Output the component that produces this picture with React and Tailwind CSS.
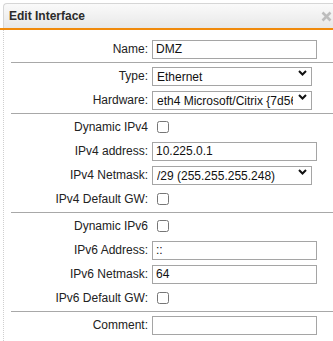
import React from "react";

const font = { fontFamily: '"Liberation Sans", Arial, sans-serif' };

const Chevron = () => (
  <svg width="9" height="6" viewBox="0 0 9 6" className="pointer-events-none absolute right-[5px] top-[6px]">
    <polyline points="1,1 4.5,4.5 8,1" fill="none" stroke="#111" strokeWidth="2" />
  </svg>
);

const Row = ({ label, children }) => (
  <div className="flex h-6 items-center">
    <div className="w-[137px] whitespace-nowrap text-right text-[12px] text-[#222]">{label}</div>
    <div className="ml-1 flex items-center">{children}</div>
  </div>
);

const TextInput = ({ value }) => (
  <input
    type="text"
    defaultValue={value}
    className="h-[19px] w-[165px] border border-[#a5a5a5] bg-white pl-[3px] text-[12px] text-[#111] outline-none"
    style={font}
  />
);

const Select = ({ value, options }) => (
  <div className="relative">
    <select
      defaultValue={value}
      className="h-[19px] w-[160px] appearance-none border border-[#a5a5a5] bg-white pl-[4px] pr-[18px] text-[12px] text-[#111] outline-none"
      style={font}
    >
      {options.map((o) => (
        <option key={o}>{o}</option>
      ))}
    </select>
    <Chevron />
  </div>
);

const Check = () => (
  <input type="checkbox" className="ml-[5px] h-[12px] w-[12px]" />
);

const Sep = () => <div className="my-px h-px bg-[#a8a8a8]" />;

export default function App() {
  return (
    <div className="h-[341px] w-[333px] overflow-hidden bg-white" style={font}>
      <div className="pt-[3px]">
        {/* HEADER */}
        <div className="relative ml-[3px] flex h-[25px] items-center rounded-tl-[4px] border-l border-t border-[#d6d6d6] bg-gradient-to-b from-[#fafafa] to-[#e8e8e8] pl-[5px]">
          <span className="text-[12px] font-bold text-[#2b2b2b]">Edit Interface</span>
          <svg width="11" height="11" viewBox="0 0 11 11" className="absolute right-[1px] top-[7px]">
            <path d="M1.5 1.5 L9.5 9.5 M9.5 1.5 L1.5 9.5" stroke="#bdbdbd" strokeWidth="2.6" />
          </svg>
        </div>
        <div className="h-[2px] bg-[#f08a0c]" />
      </div>

      {/* BODY */}
      <div className="ml-[3px] h-full border-l border-dotted border-[#cfcfcf] pl-[7px] pt-[7px]">
        <Row label="Name:">
          <TextInput value="DMZ" />
        </Row>
        <Sep />
        <Row label="Type:">
          <Select value="Ethernet" options={["Ethernet", "VLAN", "Bridge"]} />
        </Row>
        <Row label="Hardware:">
          <Select
            value="eth4 Microsoft/Citrix {7d56a1b2}"
            options={["eth4 Microsoft/Citrix {7d56a1b2}"]}
          />
        </Row>
        <Sep />
        <Row label="Dynamic IPv4">
          <Check />
        </Row>
        <Row label="IPv4 address:">
          <TextInput value="10.225.0.1" />
        </Row>
        <Row label="IPv4 Netmask:">
          <Select value="/29 (255.255.255.248)" options={["/29 (255.255.255.248)"]} />
        </Row>
        <Row label="IPv4 Default GW:">
          <Check />
        </Row>
        <Sep />
        <Row label="Dynamic IPv6">
          <Check />
        </Row>
        <Row label="IPv6 Address:">
          <TextInput value="::" />
        </Row>
        <Row label="IPv6 Netmask:">
          <TextInput value="64" />
        </Row>
        <Row label="IPv6 Default GW:">
          <Check />
        </Row>
        <Sep />
        <Row label="Comment:">
          <TextInput value="" />
        </Row>
      </div>
    </div>
  );
}
